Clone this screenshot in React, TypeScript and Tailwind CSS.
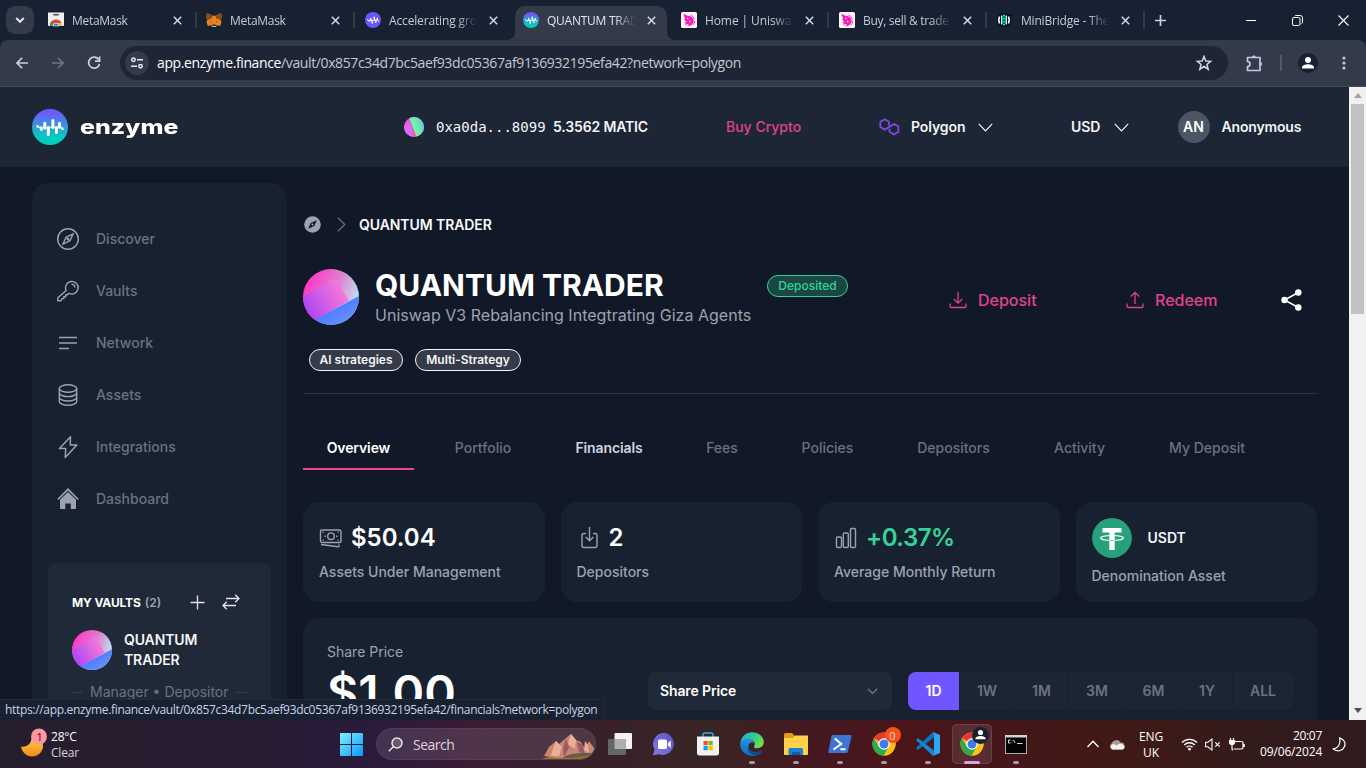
import type { ReactNode } from "react";

const segoe = "font-['Open_Sans','Noto_Sans',sans-serif]";

/* ---------- favicons and logos ---------- */

function ChromeLogo({ size = 24 }: { size?: number }) {
  return (
    <svg width={size} height={size} viewBox="0 0 48 48">
      <circle cx="24" cy="24" r="23" fill="#fbc116" />
      <path d="M4 12.5 A23 23 0 0 1 44 12.5 L24 12.5 L24 24 Z" fill="#e33b2e" />
      <path d="M4 12.5 A23 23 0 0 0 23.5 47 L34 29.5 L24 24 L14 29.8 Z" fill="#2da94f" />
      <path d="M44 12.5 A23 23 0 0 1 23.5 47 L34 29.5 L33 12.5 Z" fill="#fbc116" />
      <circle cx="24" cy="24" r="11.5" fill="#fff" />
      <circle cx="24" cy="24" r="9" fill="#3a7bf0" />
    </svg>
  );
}

function StoreFavicon() {
  return (
    <svg width="16" height="16" viewBox="0 0 16 16">
      <path d="M0 0.5h16v12.500a1 1 0 0 1-1 1H1a1 1 0 0 1-1-1z" fill="#efefed" />
      <rect x="5" y="2" width="6" height="1.600" rx=".8" fill="#4a4d50" />
      <path d="M2 14a6 6 0 0 1 11.500-2.800L8 11z" fill="#e0432f" />
      <path d="M2 14a6 6 0 0 1 1.200-4.500L6 14z" fill="#2f9e4f" />
      <path d="M13.500 11.200A6 6 0 0 1 14 14h-4l-2-3z" fill="#f8c31c" />
      <path d="M5 14a3 3 0 0 1 6 0z" fill="#3b7ded" stroke="#fff" strokeWidth=".6" />
    </svg>
  );
}

function FoxFavicon() {
  return (
    <svg width="17" height="16" viewBox="0 0 17 16">
      <path d="M1 0.500 7 3.500h3L16 .5l.6 4-.8 4 .6 2-1.400 4-3.500-1-1.500 1.500h-3L5.500 13.500 2 14.500l-1.400-4 .6-2-.8-4z" fill="#e8821e" />
      <path d="M1 .5 7 3.500 6 6.500 1.200 8.200.4 4.500zM16 .5 10 3.500l1 3 4.800 1.700.8-3.700z" fill="#8a4a20" />
      <path d="M6.800 12.800h3.400l.3 1.700H6.500z" fill="#2f3440" />
      <path d="M4.300 9l2.200 1-.3.800zM12.700 9l-2.200 1 .3.800z" fill="#2b3948" />
      <path d="M5.800 14.300h5.400l-1 1.200H6.800z" fill="#c9b9a8" />
    </svg>
  );
}

function WaveMark({ size, top, bottom, id }: { size: number; top: string; bottom: string; id: string }) {
  return (
    <svg width={size} height={size} viewBox="0 0 36 36" className="shrink-0">
      <defs>
        <linearGradient id={id} x1="0" y1="0" x2="0" y2="1">
          <stop offset=".1" stopColor={top} />
          <stop offset=".8" stopColor={bottom} />
        </linearGradient>
      </defs>
      <circle cx="18" cy="18" r="18" fill={`url(#${id})`} />
      <path
        d="M5.600 17.200v.4M30.500 19.600v.4"
        stroke="#fff"
        strokeWidth="2.400"
        strokeLinecap="round"
      />
      <path
        d="M9.300 18.800v1.800M12.800 14.200v4.800M16.300 18.500v7M20.900 11.500v7M24.400 18.500v5M27.500 14.200v4"
        stroke="#fff"
        strokeWidth="3"
        strokeLinecap="round"
      />
      <path d="M5.500 17.500 9.300 19.500 12.800 18l3.500 1.500L20.900 17.500l3.500 1.500 3.100-1.500 3 2" stroke="#fff" strokeWidth="1.100" fill="none" />
    </svg>
  );
}

function UniswapFavicon() {
  return (
    <svg width="16" height="16" viewBox="0 0 16 16">
      <rect width="16" height="16" rx="1.500" fill="#fdf3fa" />
      <path d="M2.500 1.500c2 1.500 3 2 4.500 2.200 3 .2 5 2 5.500 4.300.6 2-.5 3-1.500 4.500-.8 1-2.500 2-4.500 1.500 1.500-.8 1.500-1.500.5-2-2 0-3.500-.5-4-2 1.200.5 2 .4 2.500-.2C3.500 9 3 7 4 5.500 3 4.500 2.500 3 2.500 1.500z" fill="#f21bb5" />
      <path d="M6 5.500c1 .2 1.500 1 1.500 1.800-1 0-1.600-.6-1.500-1.800zM8.500 8.500c1 .3 1.200 1.300.5 2-.8-.4-1-1.200-.5-2z" fill="#fff" />
      <path d="M9.500 3c2 .8 3.500 2.500 3.700 4.500M13.500 9c.2 1.500-.6 3-1.500 4M4.500 12c.5.800 1 1.200 1.800 1.500" stroke="#f21bb5" strokeWidth=".9" fill="none" />
    </svg>
  );
}

function BridgeFavicon() {
  return (
    <svg width="16" height="16" viewBox="0 0 16 16">
      <circle cx="7" cy="8" r="7" fill="#080b10" />
      <path d="M10.500 2.500h5L12.500 6z" fill="#080b10" />
      <path d="M2.500 4.500Q1 8 2.500 11.500M11.500 4.500q1.500 3.500 0 7" stroke="#f4f4f4" strokeWidth="1.800" fill="none" />
      <path d="M4.500 3.500v9M9.500 3.500v9" stroke="#e9fffb" strokeWidth=".9" />
      <path d="M7 2 8.800 4v8L7 14 5.200 12V4z" fill="#12d6b5" />
      <path d="M7 4.500v1.500M7 7.500v1.500M7 10.500v1.200" stroke="#080b10" strokeWidth="1.500" />
    </svg>
  );
}

function VaultAvatar({ size, id }: { size: number; id: string }) {
  return (
    <svg width={size} height={size} viewBox="0 0 56 56" className="shrink-0">
      <defs>
        <clipPath id={`${id}c`}>
          <circle cx="28" cy="28" r="28" />
        </clipPath>
        <linearGradient id={`${id}a`} x1=".1" y1=".2" x2="1" y2=".55">
          <stop offset="0" stopColor="#ff3bc4" />
          <stop offset=".5" stopColor="#e07bcf" />
          <stop offset="1" stopColor="#bfe6f5" />
        </linearGradient>
        <linearGradient id={`${id}b`} x1="0" y1=".8" x2="1" y2=".2">
          <stop offset="0" stopColor="#a23cf8" />
          <stop offset="1" stopColor="#ff80d6" />
        </linearGradient>
        <linearGradient id={`${id}d`} x1="0" y1="0" x2="1" y2="1">
          <stop offset=".3" stopColor="#3b78fd" />
          <stop offset="1" stopColor="#7a96ff" />
        </linearGradient>
      </defs>
      <g clipPath={`url(#${id}c)`}>
        <rect width="56" height="56" fill={`url(#${id}a)`} />
        <path d="M-2 29 32 9 46 31.500 12 51-2 58z" fill={`url(#${id}b)`} />
        <path d="M8 53 56 27V56H8z" fill={`url(#${id}d)`} />
        <path d="M40 2.500A28 28 0 0 1 55.500 24" stroke="#2fe0c0" strokeWidth=".7" fill="none" />
      </g>
    </svg>
  );
}

/* ---------- browser chrome ---------- */

const tabs: { title: string; icon: ReactNode; track: string }[] = [
  { title: "MetaMask", icon: <StoreFavicon />, track: "tracking-[-0.3px]" },
  { title: "MetaMask", icon: <FoxFavicon />, track: "tracking-[-0.3px]" },
  { title: "Accelerating growth", icon: <WaveMark size={16} top="#6c55f9" bottom="#6c55f9" id="fv1" />, track: "tracking-[-0.15px]" },
  { title: "QUANTUM TRADER", icon: <WaveMark size={16} top="#6b57fa" bottom="#02cdbd" id="fv2" />, track: "tracking-[-0.25px]" },
  { title: "Home | Uniswap Inf", icon: <UniswapFavicon />, track: "tracking-[-0.1px]" },
  { title: "Buy, sell & trade Eth", icon: <UniswapFavicon />, track: "tracking-[-0.3px]" },
  { title: "MiniBridge - The B", icon: <BridgeFavicon />, track: "tracking-[-0.2px]" },
];

function TabStrip() {
  return (
    <div className="flex h-10 bg-[#182131]">
      <div className="mt-1.5 ml-1.5 flex h-7 w-7 shrink-0 items-center justify-center rounded-[9px] bg-[#333b4b]">
        <svg width="10" height="8" viewBox="0 0 10 8" fill="none" stroke="#dfe3ee" strokeWidth="2">
          <path d="M1.200 2 5 5.800 8.800 2" />
        </svg>
      </div>
      <div className="ml-[7px] flex">
        {tabs.map((tab, i) => {
          const active = i === 3;
          return (
            <div key={i} className="relative flex w-[158px] items-end">
              {active && (
                <svg className="absolute top-[6px] -left-[8px]" width="168" height="34" viewBox="0 0 168 34">
                  <path d="M0 34a8 8 0 0 0 8-8V10A10 10 0 0 1 18 0H150a10 10 0 0 1 10 10V26a8 8 0 0 0 8 8z" fill="#333b4b" />
                </svg>
              )}
              <div className="relative flex h-10 w-full items-center">
                <div className={`flex w-4 shrink-0 justify-center ${i < 2 ? "ml-[7px]" : "ml-2"}`}>{tab.icon}</div>
                <div
                  className={`w-[88px] overflow-hidden pt-px text-[12px] whitespace-nowrap [mask-image:linear-gradient(to_right,#000_68px,transparent_88px)] ${i < 2 ? "ml-2 mr-px" : "ml-2"} ${segoe} ${tab.track} ${active ? "text-[#dfe3ee]" : "text-[#c6cad6]"}`}
                >
                  {tab.title}
                </div>
                <svg className="ml-[12px]" width="9" height="9" viewBox="0 0 9 9" stroke="#d5daea" strokeWidth="1.500">
                  <path d="M.8.8 8.200 8.200M8.200.8.800 8.200" />
                </svg>
              </div>
              {i !== 2 && i !== 3 && <div className="absolute top-3 right-[2px] h-4 w-[2px] bg-[#333b4b]" />}
            </div>
          );
        })}
      </div>
      <svg className="mt-[15px] ml-[8px]" width="11" height="11" viewBox="0 0 11 11" stroke="#c9cee0" strokeWidth="1.700">
        <path d="M5.500 0v11M0 5.500h11" />
      </svg>
      <div className="ml-auto flex items-start pt-[15px] text-white">
        <svg width="10" height="11" viewBox="0 0 10 11" stroke="#fff">
          <path d="M0 5.500h10" />
        </svg>
        <svg className="ml-[36px]" width="11" height="11" viewBox="0 0 11 11" fill="none" stroke="#fff">
          <rect x=".5" y="2.500" width="7.500" height="8" rx="1.500" />
          <path d="M2.800 1.200Q3 .5 4 .5h4.200A2.300 2.300 0 0 1 10.500 2.800V7.500Q10.500 8.300 9.500 8.600" />
        </svg>
        <svg className="mr-[17px] ml-[35px]" width="11" height="11" viewBox="0 0 11 11" stroke="#fff" strokeWidth="1.100">
          <path d="M.5.5 10.500 10.500M10.500.5.500 10.500" />
        </svg>
      </div>
    </div>
  );
}

function Toolbar() {
  return (
    <div className="bg-[#182131]">
      <div className="flex h-[46px] items-center rounded-t-lg bg-[#333b4b]">
        <svg className="ml-4" width="12" height="12" viewBox="0 0 12 12" fill="none" stroke="#ccd1e1" strokeWidth="1.600">
          <path d="M12 6H1M6.200.8 1 6l5.200 5.200" />
        </svg>
        <svg className="ml-6" width="12" height="12" viewBox="0 0 12 12" fill="none" stroke="#6f7584" strokeWidth="1.600">
          <path d="M0 6h11M5.800.8 11 6l-5.200 5.200" />
        </svg>
        <svg className="ml-[23px]" width="14" height="14" viewBox="0 0 14 14" fill="none" stroke="#ccd1e1" strokeWidth="1.700">
          <path d="M11.800 3.700A5.500 5.500 0 1 0 12.500 8" />
          <path d="M12.600.6v4.600H8" />
        </svg>
        <div className="ml-[19px] flex h-[34px] w-[1108px] items-center rounded-full bg-[#1e2636]">
          <div className="ml-[5px] flex h-6 w-6 items-center justify-center rounded-full bg-[#333b4b]">
            <svg width="12" height="12" viewBox="0 0 12 12" fill="none" stroke="#e6e9f2" strokeWidth="1.500">
              <circle cx="2.500" cy="2.800" r="1.700" />
              <path d="M6 2.800h6M0 9.200h6" />
              <circle cx="9.500" cy="9.200" r="1.700" />
            </svg>
          </div>
          <div className={`ml-2 pb-[2px] text-[14px] tracking-[-0.38px] whitespace-nowrap text-[#c4c7cf] ${segoe}`}>
            <span className="text-white">app.enzyme.finance</span>/vault/0x857c34d7bc5aef93dc05367af9136932195efa42?network=polygon
          </div>
          <svg className="mr-4 ml-auto" width="16" height="16" viewBox="0 0 16 16" fill="none" stroke="#d5d7dc" strokeWidth="1.500">
            <path d="M8 1.500 9.800 6 14.700 6.300 10.900 9.400 12.200 14.200 8 11.500 3.800 14.200 5.100 9.400 1.300 6.300 6.200 6z" />
          </svg>
        </div>
        <svg className="ml-[18px]" width="17" height="17" viewBox="0 0 17 17" fill="none" stroke="#c0c8e0" strokeWidth="1.700">
          <path d="M1.500 2.500H14V15.500H1.500V11.500a2.500 2.500 0 0 0 0-5z" strokeLinejoin="round" />
          <path d="M6 2.500a1.800 1.800 0 0 1 3.600 0zM14 7.200a1.800 1.800 0 0 1 0 3.600z" fill="#c0c8e0" strokeWidth=".6" />
        </svg>
        <div className="ml-[17px] h-4 w-[2px] bg-[#4e5a72]" />
        <svg className="ml-4" width="20" height="20" viewBox="0 0 20 20">
          <circle cx="10" cy="10" r="10" fill="#182131" />
          <circle cx="10" cy="7" r="3" fill="#fff" />
          <path d="M4 15.500v-1c0-2.200 3.500-3.300 6-3.300s6 1.100 6 3.300v1z" fill="#fff" />
        </svg>
        <svg className="ml-[24px]" width="4" height="14" viewBox="0 0 4 14" fill="#c0c8e0">
          <circle cx="2" cy="2" r="1.600" />
          <circle cx="2" cy="7" r="1.600" />
          <circle cx="2" cy="12" r="1.600" />
        </svg>
      </div>
      <div className="h-px bg-[#46484c]" />
    </div>
  );
}

/* ---------- page ---------- */

function Chevron() {
  return (
    <svg width="15" height="9" viewBox="0 0 15 9" fill="none" stroke="#f3f4f6" strokeWidth="1.200">
      <path d="M.8.800 7.500 7.800 14.200.8" />
    </svg>
  );
}

function Header() {
  return (
    <header className="flex h-20 shrink-0 items-center bg-[#1d2634] pl-8 text-[14px] font-semibold whitespace-nowrap text-[#f3f4f6]">
      <WaveMark size={36} top="#6f58fb" bottom="#00cfc0" id="logo" />
      <div className="ml-[12px] w-[324px] pb-px">
        <span className="inline-block origin-left scale-x-[1.24] text-[20px] leading-6 font-extrabold text-white">enzyme</span>
      </div>
      <svg width="20" height="20" viewBox="0 0 20 20">
        <defs>
          <clipPath id="gem">
            <circle cx="10" cy="10" r="10" />
          </clipPath>
          <linearGradient id="gemg" x1="0" y1=".5" x2="1" y2="0">
            <stop offset=".3" stopColor="#74f5a6" />
            <stop offset="1" stopColor="#5cc2e0" />
          </linearGradient>
        </defs>
        <g clipPath="url(#gem)">
          <rect width="20" height="20" fill="#f25bd8" />
          <path d="M0 8l8 1 3 11H0z" fill="#d56df5" />
          <path d="M8 8 9 20 13 20z" fill="#ff4fb8" />
          <path d="M5 0 12.500 20H20V0z" fill="url(#gemg)" />
        </g>
      </svg>
      <span className="ml-3 w-[117px] font-['DejaVu_Sans_Mono',monospace] text-[14px] font-normal">0xa0da...8099</span>
      <span className="w-[173px] pb-[2px] tracking-[-0.15px]">5.3562 MATIC</span>
      <span className="w-[153px] pb-[2px] font-medium text-[#e0438e]">Buy Crypto</span>
      <svg width="21" height="18" viewBox="0 0 21 18" fill="none" stroke="#8247e5" strokeWidth="1.800">
        <path d="M10 7.500V3.800L5.800 1.200 1.300 3.800v5.200l4.500 2.600L15 6l4.400 2.600v5.100L15 16.500l-4.500-2.700v-3" />
      </svg>
      <span className="ml-[11px] w-[66.500px] pb-[2px] tracking-[-0.1px]">Polygon</span>
      <Chevron />
      <span className="ml-[78.500px] w-[42.500px] pb-[2px] tracking-[-0.1px]">USD</span>
      <Chevron />
      <div className="ml-[49px] flex h-8 w-8 items-center justify-center rounded-full bg-[#4b5563] pb-[2px] text-[14px] text-white">AN</div>
      <span className="ml-3 pb-[2px] tracking-[-0.17px]">Anonymous</span>
    </header>
  );
}

const nav: { label: string; icon: ReactNode }[] = [
  {
    label: "Discover",
    icon: (
      <>
        <circle cx="12" cy="12" r="10.300" />
        <path d="M17 7 14 13.800 7 17l3-6.800z" />
        <path d="M10.300 10.300 13.700 13.700M11 13l2-2" />
      </>
    ),
  },
  {
    label: "Vaults",
    icon: (
      <>
        <path d="M10.200 11.500A6.300 6.300 0 1 1 13 14.300L11.500 15.800H9.700v1.900H7.800v1.900H5.900L5 21.800H1.800V18.800z" strokeLinejoin="round" />
        <path d="M15.500 5.200a3 3 0 0 1 3.300 3.300" />
      </>
    ),
  },
  { label: "Network", icon: <path d="M3 6.500H21M3 12H21M3 17.500H13" strokeWidth="1.700" /> },
  {
    label: "Assets",
    icon: (
      <>
        <ellipse cx="12" cy="5.500" rx="8.700" ry="3.800" />
        <path d="M3.300 5.500v13c0 2.100 3.900 3.800 8.700 3.800s8.700-1.700 8.700-3.800v-13M3.300 9.800c0 2.100 3.900 3.800 8.700 3.800s8.700-1.700 8.700-3.800M3.300 14.200c0 2.100 3.900 3.800 8.700 3.800s8.700-1.700 8.700-3.800" />
      </>
    ),
  },
  { label: "Integrations", icon: <path d="M14.500 1.800 3.500 13.500h6.300L9.200 22.500 20.800 10h-6.500z" strokeLinejoin="round" /> },
  {
    label: "Dashboard",
    icon: (
      <>
        <path d="M1.800 12.500 12 2.300 22.200 12.500" strokeWidth="1.700" />
        <path d="M4 12.800 12 5l8 7.800V21a1 1 0 0 1-1 1h-4.200v-5.500H9.300V22H5a1 1 0 0 1-1-1z" fill="#9ca3af" stroke="none" />
      </>
    ),
  },
];

function Sidebar() {
  return (
    <aside className="w-[255px] shrink-0 rounded-t-[16px] bg-[#18212f] px-4 pt-[30px]">
      <nav>
        {nav.map((item) => (
          <div key={item.label} className="flex h-[52px] items-center pl-2 text-[14px] font-medium text-[#6b7280]">
            <svg width="24" height="24" viewBox="0 0 24 24" fill="none" stroke="#9ca3af" strokeWidth="1.450">
              {item.icon}
            </svg>
            <span className="ml-4 pb-[2px]">{item.label}</span>
          </div>
        ))}
      </nav>
      <div className="mt-[38px] h-[200px] rounded-lg bg-[#1f2937] px-6 pt-[29px]">
        <div className="flex h-5 items-center text-[12px] font-bold whitespace-nowrap text-white">
          <span className="pt-px tracking-[-0.13px]">MY VAULTS</span>
          <span className="ml-1 pt-px font-semibold text-[#9ca3af]">(2)</span>
          <svg className="ml-[29px]" width="15" height="15" viewBox="0 0 15 15" stroke="#e5e7eb" strokeWidth="1.300">
            <path d="M7.500.5v14M.5 7.500h14" />
          </svg>
          <svg className="ml-[17px]" width="18" height="16" viewBox="0 0 18 16" fill="none" stroke="#e5e7eb" strokeWidth="1.300">
            <path d="M4 4.500H17M13.200.7 17 4.500 13.200 8.200M14 11.500H1M4.800 7.800 1 11.500 4.800 15.300" />
          </svg>
        </div>
        <div className="mt-[18px] flex items-center text-[14px] leading-5 font-semibold tracking-[-0.12px] text-[#f3f4f6]">
          <VaultAvatar size={40} id="va" />
          <div className="ml-3">
            QUANTUM
            <br />
            TRADER
          </div>
        </div>
        <div className="mt-[12px] flex items-center text-[14px] leading-5 whitespace-nowrap text-[#6b7280]">
          <div className="h-px w-[10px] bg-[#374151]" />
          <span className="mx-2">Manager • Depositor</span>
          <div className="h-px w-[10px] bg-[#374151]" />
        </div>
      </div>
    </aside>
  );
}

const vaultTabs = [
  { label: "Overview", width: "w-[111px]", style: "text-white font-semibold tracking-[-0.12px] border-b-2 border-[#ec4492]" },
  { label: "Portfolio", width: "w-[138px]", style: "text-[#6b7280] pb-[2px]" },
  { label: "Financials", width: "w-[114px]", style: "text-[#d1d5db] font-semibold tracking-[-0.12px] pb-[2px]" },
  { label: "Fees", width: "w-[112px]", style: "text-[#6b7280] pb-[2px]" },
  { label: "Policies", width: "w-[99px]", style: "text-[#6b7280] pb-[2px]" },
  { label: "Depositors", width: "w-[153px]", style: "text-[#6b7280] pb-[2px]" },
  { label: "Activity", width: "w-[99px]", style: "text-[#6b7280] pb-[2px]" },
  { label: "My Deposit", width: "w-[156px]", style: "text-[#6b7280] pb-[2px]" },
];

function Stat({ icon, value, label, green }: { icon: ReactNode; value: string; label: string; green?: boolean }) {
  return (
    <div className="h-[100px] rounded-[16px] bg-[#18212f] px-4 pt-[20px] whitespace-nowrap">
      <div className={`flex h-8 items-center gap-2 text-[24px] font-semibold ${green ? "tracking-[-0.5px] text-[#34d399]" : "text-white"}`}>
        <svg width="24" height="24" viewBox="0 0 24 24" fill="none" stroke="#9ca3af" strokeWidth="1.400">
          {icon}
        </svg>
        {value}
      </div>
      <div className="mt-[8px] text-[14px] leading-5 font-medium text-[#9ca3af]">{label}</div>
    </div>
  );
}

function Stats() {
  return (
    <div className="mt-8 grid grid-cols-4 gap-4">
      <Stat
        value="$50.04"
        label="Assets Under Management"
        icon={
          <>
            <rect x="1.500" y="4" width="20.500" height="12.500" rx="1.500" />
            <circle cx="12" cy="10.200" r="3.300" />
            <path d="M5.500 10.200h1.500M17 10.200h1.500M2 18.500 19 20.800q1 .1 1-1V18.500M3.800 6.200h1M18.700 6.200h1M3.800 14.200h1M18.700 14.200h1" />
          </>
        }
      />
      <Stat
        value="2"
        label="Depositors"
        icon={
          <>
            <path d="M9 7.500H7a2 2 0 0 0-2 2v10a2 2 0 0 0 2 2H18a2 2 0 0 0 2-2v-10a2 2 0 0 0-2-2H16" />
            <path d="M12.500 1v13.500M8.700 11l3.800 3.800 3.800-3.800" />
          </>
        }
      />
      <Stat
        green
        value="+0.37%"
        label="Average Monthly Return"
        icon={
          <>
            <rect x="2.500" y="11" width="5" height="10.500" rx="1.200" />
            <rect x="9.300" y="7" width="5" height="14.500" rx="1.200" />
            <rect x="16.500" y="2.500" width="5" height="19" rx="1.200" />
          </>
        }
      />
      <div className="h-[100px] rounded-[16px] bg-[#18212f] px-4 pt-4 text-[14px]">
        <div className="flex items-center font-semibold text-[#f3f4f6]">
          <svg width="40" height="40" viewBox="0 0 40 40">
            <circle cx="20" cy="20" r="19.900" fill="#26a17b" />
            <path d="M10.500 10H29.500V14.500H22.700V32H17.300V14.500H10.500z" fill="#fff" />
            <ellipse cx="20" cy="20" rx="11.500" ry="2.500" fill="none" stroke="#fff" strokeWidth="1.100" />
            <path d="M17.300 22.400h5.400" stroke="#26a17b" strokeWidth=".6" />
          </svg>
          <span className="ml-[16px] pb-[2px]">USDT</span>
        </div>
        <div className="mt-2 leading-5 font-medium text-[#9ca3af]">Denomination Asset</div>
      </div>
    </div>
  );
}

const ranges = [
  ["1W", "w-[54px]"],
  ["1M", "w-[53px]"],
  ["3M", "w-[56px]"],
  ["6M", "w-[55px]"],
  ["1Y", "w-[50px]"],
  ["ALL", "w-[60px]"],
];

function Chart() {
  return (
    <section className="mt-4 flex h-[200px] shrink-0 rounded-t-[16px] bg-[#18212f] px-6 pt-6">
      <div className="w-[321px]">
        <div className="text-[14px] leading-5 text-[#9ca3af]">Share Price</div>
        <div className="pt-px text-[48px] leading-[60px] font-semibold text-white">$1.00</div>
      </div>
      <div className="mt-[30px] flex h-[38px] w-[244px] items-center justify-between rounded-lg bg-[#1f2937] pr-[14px] pl-3 text-[14px] font-semibold text-white">
        <span className="pb-[2px] tracking-[-0.12px]">Share Price</span>
        <svg width="11" height="7" viewBox="0 0 11 7" fill="none" stroke="#6b7280" strokeWidth="1.500">
          <path d="M.8.800 5.500 5.500 10.200.8" />
        </svg>
      </div>
      <div className="mt-[30px] ml-4 flex h-[38px] w-[385px] gap-px overflow-hidden rounded-lg text-center text-[14px] leading-[38px] font-semibold text-[#6b7280]">
        <div className="w-[51px] shrink-0 bg-[#7056ff] text-white">1D</div>
        {ranges.map(([label, width]) => (
          <div key={label} className={`${width} bg-[#1c2533]`}>
            {label}
          </div>
        ))}
      </div>
    </section>
  );
}

function Main() {
  return (
    <main className="ml-4 flex w-[1014px] flex-col pt-[32px]">
      <div className="flex h-5 items-center text-[14px] font-semibold text-[#f9fafb]">
        <svg className="mb-px ml-px" width="17" height="17" viewBox="0 0 17 17">
          <circle cx="8.500" cy="8.500" r="8.300" fill="#9ca3af" />
          <path d="M12.800 4.200 10.300 9.900 4.200 12.800 6.700 7z" fill="#111827" />
          <circle cx="8.500" cy="8.500" r="1" fill="#9ca3af" />
        </svg>
        <svg className="mb-px ml-[15.500px]" width="9" height="15" viewBox="0 0 9 15" fill="none" stroke="#6b7280" strokeWidth="1.200">
          <path d="M.8.800 7.800 7.500.800 14.200" />
        </svg>
        <span className="ml-[13.500px] pb-[2px] tracking-[-0.08px]">QUANTUM TRADER</span>
      </div>

      <div className="mt-8 flex h-[60px] items-start whitespace-nowrap">
        <div className="pt-[2px]">
          <VaultAvatar size={56} id="vb" />
        </div>
        <div className="ml-4 w-[392px]">
          <h1 className="text-[30px] leading-9 font-bold text-white">QUANTUM TRADER</h1>
          <p className="text-[16px] leading-6 tracking-[0.02px] text-[#9ca3af]">Uniswap V3 Rebalancing Integtrating Giza Agents</p>
        </div>
        <div className="mt-[8px] flex h-[22px] w-[81px] items-center justify-center rounded-full border border-[#34d399] bg-[#1a4744] text-[12px] font-medium text-[#34d399]">
          Deposited
        </div>
        <div className="mt-[21px] ml-[101px] flex h-6 w-[177px] items-center text-[16px] font-medium text-[#e0438e]">
          <svg width="18" height="18" viewBox="0 0 18 18" fill="none" stroke="#e0438e" strokeWidth="1.300">
            <path d="M9 .8V12M4.800 8 9 12.200 13.200 8M1 12.500V15.300q0 1.200 1.200 1.200H15.800q1.200 0 1.200-1.200V12.500" />
          </svg>
          <span className="ml-[11px]">Deposit</span>
        </div>
        <div className="mt-[21px] flex h-6 w-[155px] items-center text-[16px] font-medium text-[#e0438e]">
          <svg width="18" height="18" viewBox="0 0 18 18" fill="none" stroke="#e0438e" strokeWidth="1.300">
            <path d="M9 13V1.500M4.800 5.500 9 1.300 13.200 5.500M1 12.500V15.300q0 1.200 1.200 1.200H15.800q1.200 0 1.200-1.200V12.500" />
          </svg>
          <span className="ml-[11px]">Redeem</span>
        </div>
        <svg className="mt-[22px]" width="21" height="22" viewBox="0 0 21 22" fill="#fff" stroke="#fff" strokeWidth="1.500">
          <path d="M17.300 3.500 3.500 11l13.800 7.500" fill="none" />
          <circle cx="17.300" cy="3.500" r="2.500" />
          <circle cx="3.500" cy="11" r="2.500" />
          <circle cx="17.300" cy="18.500" r="2.500" />
        </svg>
      </div>

      <div className="mt-[22px] ml-[6px] flex gap-3 text-[12px] font-semibold whitespace-nowrap text-[#f3f4f6]">
        <div className="flex h-[22px] w-[94px] items-center justify-center rounded-full border border-[#f3f4f6] bg-[#353b49]">AI strategies</div>
        <div className="flex h-[22px] w-[106px] items-center justify-center rounded-full border border-[#f3f4f6] bg-[#353b49] tracking-[-0.05px]">Multi-Strategy</div>
      </div>

      <div className="mt-[22px] h-px shrink-0 bg-[#2b3341]" />

      <div className="mt-8 flex text-[14px] font-medium">
        {vaultTabs.map((tab) => (
          <div key={tab.label} className={`flex h-11 items-center justify-center ${tab.width} ${tab.style}`}>
            {tab.label}
          </div>
        ))}
      </div>

      <Stats />
      <Chart />
    </main>
  );
}

/* ---------- taskbar ---------- */

function TaskIcon({ children, dot, active }: { children: ReactNode; dot?: boolean; active?: boolean }) {
  return (
    <div
      className={`relative mx-[2px] flex h-10 w-10 items-center justify-center ${active ? "rounded-[5px] border border-white/10 bg-white/10" : ""}`}
    >
      {children}
      {dot && <div className="absolute bottom-0 h-[3px] w-[6px] rounded-full bg-[#a79a9a]" />}
      {active && <div className="absolute -bottom-px h-[3px] w-4 rounded-full bg-[#d9a0e8]" />}
    </div>
  );
}

function Taskbar() {
  return (
    <footer
      className={`relative flex h-12 items-center bg-[linear-gradient(90deg,#261e2e_0%,#281c30_17%,#2a1a3c_27%,#3a1b35_34%,#38202b_43%,#382525_51%,#45181f_60%,#4a151b_66%,#45161a_74%,#3f1a14_82%,#331b1c_92%,#2f1a1d_100%)] text-white ${segoe}`}
    >
      <svg className="ml-5 mb-[3px]" width="28" height="30" viewBox="0 0 28 30">
        <defs>
          <linearGradient id="moon" x1="0" y1="0" x2="0" y2="1">
            <stop offset="0" stopColor="#ffd24a" />
            <stop offset="1" stopColor="#ee8a16" />
          </linearGradient>
        </defs>
        <path d="M1 18.500c6 1 10-2.500 11-9C20 9 23.500 14 23 19c-.6 5-5 9.500-11 9.500S2 24 1 18.500z" fill="url(#moon)" />
        <circle cx="19" cy="8.500" r="8" fill="#ff95a1" />
        <text x="16.300" y="12.800" fontSize="11.500" fill="#3a1520" fontFamily="Open Sans">
          1
        </text>
      </svg>
      <div className="ml-[3px] w-[289px] pt-px text-[12px] leading-4 tracking-[-0.2px]">
        <div>28°C</div>
        <div className="text-[#d8d2da]">Clear</div>
      </div>
      <svg width="23" height="23" viewBox="0 0 23 23">
        <defs>
          <linearGradient id="win" x1="0" y1="0" x2="1" y2="1">
            <stop offset="0" stopColor="#7ff0ff" />
            <stop offset="1" stopColor="#0a98f8" />
          </linearGradient>
        </defs>
        <path d="M0 1a1 1 0 0 1 1-1H11V11H0zM12 0H22a1 1 0 0 1 1 1V11H12zM0 12H11V23H1a1 1 0 0 1-1-1zM12 12H23V22a1 1 0 0 1-1 1H12z" fill="url(#win)" />
      </svg>
      <div className="ml-[13px] flex h-8 w-[220px] shrink-0 items-center overflow-hidden rounded-full border border-white/5 bg-[#ffffff1c] pl-[11px]">
        <svg width="15" height="15" viewBox="0 0 15 15" fill="none" stroke="#eee6ee" strokeWidth="1.500">
          <circle cx="9" cy="6" r="5" fill="#ffffff30" />
          <path d="M5.500 9.500.8 14.200" />
        </svg>
        <span className="ml-[10px] text-[14px] tracking-[-0.5px] text-[#ddd3dc]">Search</span>
        <svg className="mt-1 ml-auto" width="54" height="25" viewBox="0 0 54 25">
          <path d="M0 25C8 22 16 22 22 23 30 19 42 21 53 21L48 25z" fill="#a5711a" />
          <path d="M3 22 8 13 15 7l3 3 7-6 5-4 5 6 5 2 4 7 4-8 5 7 2 5-3 4-17-1-9 2-11 0z" fill="#c78673" />
          <path d="M15 7 12 15 10 22 18 22 21 13 18 10zM30 0 27 10 34 15 35 6zM44 7 43 16 48 19 47 11z" fill="#eab095" />
          <path d="M25 4 22 14 23 23 28 14zM36 8 38 18 44 20 41 10z" fill="#985d61" />
          <path d="M22 24C29 18 40 19 52 19L48 22 32 24z" fill="#6b5a50" />
        </svg>
      </div>
      <div className="ml-[1.500px] flex items-center">
        <TaskIcon>
          <svg width="24" height="22" viewBox="0 0 24 22">
            <rect x="6.500" y="0" width="17.500" height="16" rx="1" fill="#f2f2f2" />
            <rect x="0" y="6" width="18" height="16" rx="1" fill="#666" />
            <rect x="6.500" y="6" width="11.500" height="10" fill="#aeaeae" />
          </svg>
        </TaskIcon>
        <TaskIcon>
          <svg width="24" height="24" viewBox="0 0 24 24">
            <defs>
              <linearGradient id="tms" x1="0" y1="1" x2="1" y2="0">
                <stop offset="0" stopColor="#8a78e0" />
                <stop offset="1" stopColor="#5557c0" />
              </linearGradient>
            </defs>
            <path d="M12.500 1A11 11 0 1 1 7 22.200L1 23.300 2.600 17.500A11 11 0 0 1 12.500 1z" fill="url(#tms)" />
            <rect x="6" y="7.500" width="9" height="9.500" rx="1.500" fill="#fff" />
            <path d="M16 11l2.700-2.500v7.500L16 13.500z" fill="#fff" />
          </svg>
        </TaskIcon>
        <TaskIcon>
          <svg width="24" height="24" viewBox="0 0 24 24">
            <path d="M7 5V2.500Q7 1 8.500 1h7Q17 1 17 2.500V5" fill="none" stroke="#2ab0f0" strokeWidth="1.500" />
            <path d="M1 4.500H23V21a2.500 2.500 0 0 1-2.500 2.500h-17A2.500 2.500 0 0 1 1 21z" fill="#f1f1f1" />
            <path d="M7.500 9h4.200v4.200H7.500z" fill="#f25022" />
            <path d="M12.500 9h4.200v4.200h-4.200z" fill="#7fba00" />
            <path d="M7.500 14h4.200v4.200H7.500z" fill="#00a4ef" />
            <path d="M12.500 14h4.200v4.200h-4.200z" fill="#ffb900" />
          </svg>
        </TaskIcon>
        <TaskIcon dot>
          <svg width="24" height="24" viewBox="0 0 24 24">
            <defs>
              <linearGradient id="e1" x1="0" y1="0" x2="1" y2=".5">
                <stop offset="0" stopColor="#2aa9e0" />
                <stop offset=".6" stopColor="#35c98f" />
                <stop offset="1" stopColor="#72df4d" />
              </linearGradient>
              <linearGradient id="e2" x1="0" y1="0" x2="0" y2="1">
                <stop offset="0" stopColor="#1f95e0" />
                <stop offset="1" stopColor="#1168bd" />
              </linearGradient>
            </defs>
            <path d="M.5 11C1 4.500 6 .2 12 .2c7 0 11.800 4.800 11.800 9.800 0 4-3 6.200-6.500 6.200-2.800 0-3.800-1-3.300-1.800 1.500-2 .8-5-2.500-6.400C7.500 6.500 2 7.500.5 11z" fill="url(#e1)" />
            <path d="M.2 12.500C.2 8.500 4 6.300 8 6.800c3 .3 5.500 2 6 4.500-1-1.500-5.500-1-5.500 3 0 4.500 5 7.500 10.500 5.200 1.500-.6 3-1.200 3 0-2 3-5.500 4.400-9.500 4.400C5.500 23.900.2 18.500.2 12.500z" fill="url(#e2)" />
            <path d="M8.500 14.300c0 4.500 5 7.500 10.500 5.200 1.500-.6 3-1.200 3 0-1.800 2.700-4.600 4-7.500 4.300C9.500 22 6.500 18 8.500 14.300z" fill="#114a8b" />
          </svg>
        </TaskIcon>
        <TaskIcon dot>
          <svg width="24" height="22" viewBox="0 0 24 22">
            <path d="M0 1.500A1.500 1.500 0 0 1 1.500 0H8l2.500 2.500V6H0z" fill="#e09b0c" />
            <path d="M0 5H8.500L11 2.500H24V21a1 1 0 0 1-1 1H1a1 1 0 0 1-1-1z" fill="#ffd04a" />
            <path d="M4.500 22V16.500a1.500 1.500 0 0 1 1.500-1.500H17.500a1.500 1.500 0 0 1 1.500 1.500V22z" fill="#1c7fd6" />
            <path d="M8 22v-2q0-1 1-1h6q1 0 1 1v2z" fill="#0e5ba6" />
          </svg>
        </TaskIcon>
        <TaskIcon dot>
          <svg width="24" height="20" viewBox="0 0 24 20">
            <path d="M4.500 1H22.500a1 1 0 0 1 1 1.200L19.800 18q-.3 1-1.300 1H1.300a1 1 0 0 1-1-1.200L3.500 2q.2-1 1-1z" fill="#3e74d6" />
            <path d="M6.800 4.500 13.300 10 5.500 15.500M12.500 15.300h5" stroke="#fff" strokeWidth="2" fill="none" />
          </svg>
        </TaskIcon>
        <TaskIcon dot>
          <ChromeLogo />
          <div className="absolute top-[3px] right-[3px] flex h-4 w-4 items-center justify-center rounded-full bg-[#f7501f] text-[11px] leading-none text-[#ffd9cc]">0</div>
        </TaskIcon>
        <TaskIcon dot>
          <svg width="24" height="24" viewBox="0 0 24 24">
            <path d="M17 0 4.800 11.500 0 15.500 1.800 18 18 5.500z" fill="#0a72c0" />
            <path d="M0 8.300 1.800 6 18 18.500 17 24 4.800 12.500z" fill="#1387d2" />
            <path d="M17 0 24 3V21L17 24l1-5.500v-13z" fill="#29a6f2" />
          </svg>
        </TaskIcon>
        <TaskIcon active>
          <ChromeLogo />
          <svg className="absolute top-[2px] right-[2px]" width="17" height="17" viewBox="0 0 20 20">
            <circle cx="10" cy="10" r="10" fill="#182131" />
            <circle cx="10" cy="6.500" r="3" fill="#fff" />
            <path d="M4 14.500v-1c0-2 3.500-3 6-3s6 1 6 3v1z" fill="#fff" />
          </svg>
        </TaskIcon>
        <TaskIcon dot>
          <svg width="22" height="19" viewBox="0 0 22 19">
            <rect x=".5" y=".5" width="21" height="18" fill="#050505" stroke="#a9abae" />
            <rect x="0" y="0" width="22" height="2.500" fill="#cdd3da" />
            <path d="M5.500 5H3.500v3h2M7 5.500v.5M7 7.500v.5M8.500 5 10 8M12 8.500h5.500" stroke="#ddd" strokeWidth="1" fill="none" />
          </svg>
        </TaskIcon>
      </div>
      <div className="ml-auto flex items-center text-[12px] leading-4 tracking-[-0.1px]">
        <svg width="12" height="8" viewBox="0 0 12 8" fill="none" stroke="#fff" strokeWidth="1.300">
          <path d="M.5 7 6 1.200 11.500 7" />
        </svg>
        <svg className="ml-[10px]" width="16" height="11" viewBox="0 0 16 11">
          <path d="M3.500 10.500A3.300 3.300 0 0 1 2.500 4.500 5 5 0 0 1 11.500 3.500 3.500 3.500 0 0 1 12.500 10.500z" fill="#a99b98" />
          <path d="M3.500 10.500a2.800 2.800 0 0 1 0-5.300c2-.3 3 .5 4 1.200C9.500 4.200 13 4 14.500 6.200c2 1.500 1 4.300-1.500 4.300z" fill="#f4f2f2" />
        </svg>
        <div className="ml-[14px] w-6 pt-px text-center">
          ENG
          <br />
          UK
        </div>
        <svg className="ml-[18px]" width="17" height="13" viewBox="0 0 17 13" fill="none" stroke="#fff" strokeWidth="1.300">
          <path d="M1 4.500a10.500 10.500 0 0 1 15 0M3.200 7a7.400 7.400 0 0 1 10.600 0M5.500 9.300a4.300 4.300 0 0 1 6 0" />
          <circle cx="8.500" cy="11.200" r="1.400" fill="#fff" stroke="none" />
        </svg>
        <svg className="ml-[7px]" width="16" height="13" viewBox="0 0 16 13" fill="none" stroke="#fff" strokeWidth="1.100">
          <path d="M.6 4.200H3L7 .9v11.200L3 8.800H.6z" strokeLinejoin="round" />
          <path d="M10.300 4.300 14.700 8.700M14.700 4.300 10.300 8.700" />
        </svg>
        <svg className="ml-[8px]" width="16" height="13" viewBox="0 0 16 13" fill="none" stroke="#fff" strokeWidth="1.200">
          <path d="M5 3.500H12.500Q14 3.500 14 5v4.500Q14 11 12.500 11H4.500M15.200 6v3" />
          <path d="M1.500 0v3M4.500 0v3M3 6v5q0 1 1 1" />
          <path d="M.5 2.500h5V5Q5 6.500 3 6.500T.5 5z" fill="#fff" />
        </svg>
        <div className="ml-[15px] w-[62px] text-right tracking-[-0.15px] whitespace-nowrap">
          <div className="tracking-[-0.3px]">20:07</div>
          <div>09/06/2024</div>
        </div>
        <svg className="mr-5 ml-[10px]" width="14" height="15" viewBox="0 0 14 15" fill="none" stroke="#fff" strokeWidth="1.200">
          <path d="M7.500.8C12 2 14 6 12.500 9.500 11 13.500 5.500 15.500 1 11.800 6.500 11.500 9 6.500 7.500.8z" strokeLinejoin="round" />
        </svg>
      </div>
    </footer>
  );
}

export default function App() {
  return (
    <div className="relative flex h-[768px] w-[1366px] flex-col overflow-hidden bg-[#111827] font-['Inter',sans-serif]">
      <TabStrip />
      <Toolbar />
      <div className="flex h-[633px] overflow-hidden">
        <div className="flex w-[1349px] flex-col overflow-hidden">
          <Header />
          <div className="flex h-[553px] overflow-hidden pt-4 pl-8">
            <Sidebar />
            <Main />
          </div>
        </div>
        <div className="flex w-[17px] flex-col items-center bg-[#f1f1f1]">
          <svg className="mt-[6px]" width="8" height="5" viewBox="0 0 8 5" fill="#a3a3a3">
            <path d="M4 0 8 5H0z" />
          </svg>
          <div className="mt-[6px] h-[210px] w-[13px] bg-[#c1c1c1]" />
          <svg className="mt-auto mb-[7px]" width="8" height="5" viewBox="0 0 8 5" fill="#505050">
            <path d="M4 5 8 0H0z" />
          </svg>
        </div>
      </div>
      <div
        className={`absolute top-[699px] left-0 h-[21px] w-[605px] rounded-tr-[3px] border-t border-r border-[#222a38] bg-[#182130] pl-[5px] text-[12px] leading-[20px] tracking-[-0.325px] whitespace-nowrap text-[#c9d3ea] ${segoe}`}
      >
        https://app.enzyme.finance/vault/0x857c34d7bc5aef93dc05367af9136932195efa42/financials?network=polygon
      </div>
      <Taskbar />
    </div>
  );
}
